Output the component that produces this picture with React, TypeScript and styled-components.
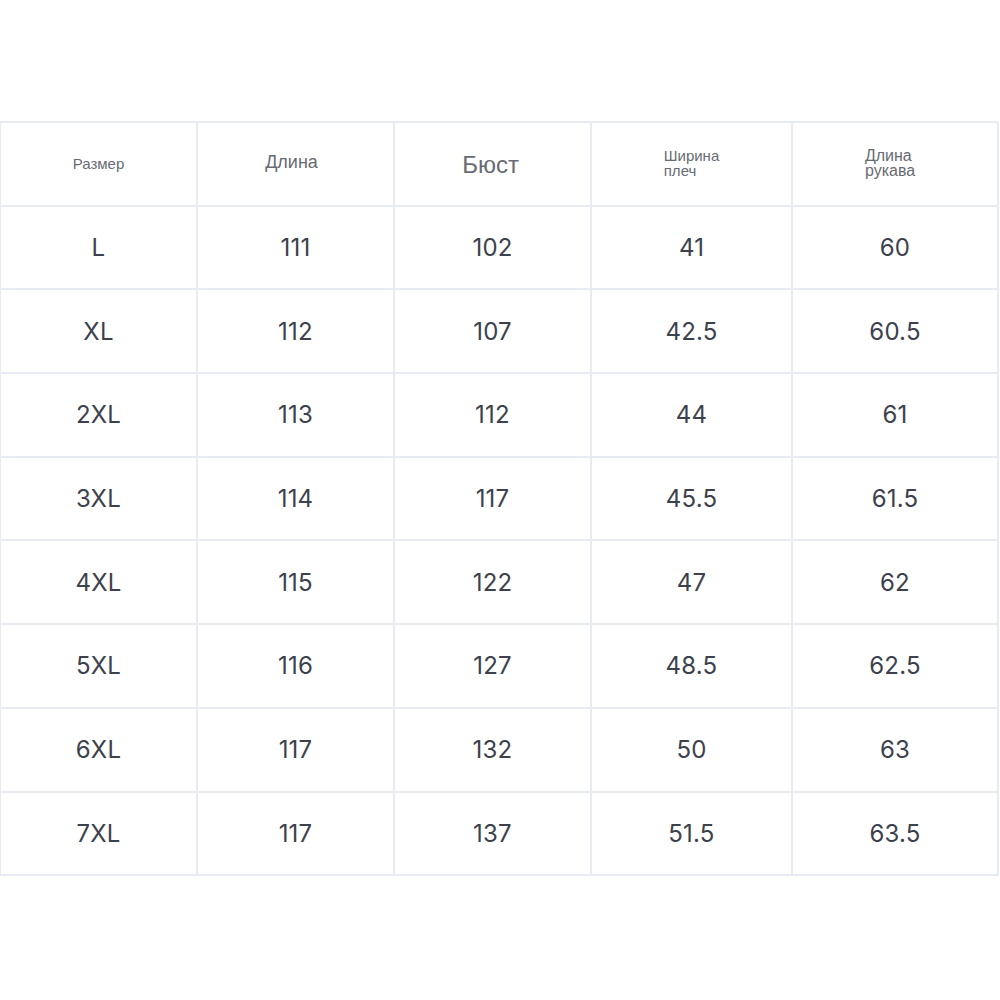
import React from "react";
import styled, { createGlobalStyle } from "styled-components";

const Global = createGlobalStyle`
  html, body { margin: 0; padding: 0; background: #ffffff; }
  * { box-sizing: border-box; }
`;

const Page = styled.div`
  width: 1000px;
  height: 1000px;
  padding-top: 121px;
  background: #fff;
`;

const Table = styled.div`
  display: grid;
  grid-template-columns: 197px 197px 197px 201px 206px;
  grid-auto-rows: 83.7px;
  width: 998px;
  border-top: 2px solid #e8ebf2;
  border-left: 1px solid #e8ebf2;
`;

const Cell = styled.div`
  display: flex;
  align-items: center;
  justify-content: center;
  padding-bottom: 0;
  border-right: 2px solid #e8ebf2;
  border-bottom: 2px solid #e8ebf2;
  color: #3d414c;
  font-family: Inter, "Open Sans", sans-serif;
  font-weight: 400;
  font-size: 24px;
  letter-spacing: 0.2px;
`;

const HeadText = styled.span<{ $size: number; $narrow?: boolean; $dx?: number; $dy?: number }>`
  font-family: ${(p) => (p.$narrow ? '"Liberation Sans Narrow", "Liberation Sans", sans-serif' : '"Liberation Sans", Arial, sans-serif')};
  font-size: ${(p) => p.$size}px;
  line-height: ${(p) => (p.$narrow ? "15px" : "1.15")};
  color: #676b72;
  text-align: left;
  transform: translate(${(p) => p.$dx ?? 0}px, ${(p) => p.$dy ?? 0}px);
  letter-spacing: 0;
`;

const rows = [
  ["L", "111", "102", "41", "60"],
  ["XL", "112", "107", "42.5", "60.5"],
  ["2XL", "113", "112", "44", "61"],
  ["3XL", "114", "117", "45.5", "61.5"],
  ["4XL", "115", "122", "47", "62"],
  ["5XL", "116", "127", "48.5", "62.5"],
  ["6XL", "117", "132", "50", "63"],
  ["7XL", "117", "137", "51.5", "63.5"],
];

export default function App() {
  return (
    <Page>
      <Global />
      <Table>
        <Cell>
          <HeadText $size={15} $dy={0}>Размер</HeadText>
        </Cell>
        <Cell>
          <HeadText $size={18} $dx={-4} $dy={-2}>Длина</HeadText>
        </Cell>
        <Cell>
          <HeadText $size={24} $dx={-2} $dy={1}>Бюст</HeadText>
        </Cell>
        <Cell>
          <HeadText $size={15} $narrow $dx={0} $dy={-1}>
            Ширина
            <br />
            плеч
          </HeadText>
        </Cell>
        <Cell>
          <HeadText $size={16} $narrow $dx={-5} $dy={-1}>
            Длина
            <br />
            рукава
          </HeadText>
        </Cell>
        {rows.map((r, i) =>
          r.map((v, j) => <Cell key={`${i}-${j}`}>{v}</Cell>)
        )}
      </Table>
    </Page>
  );
}
